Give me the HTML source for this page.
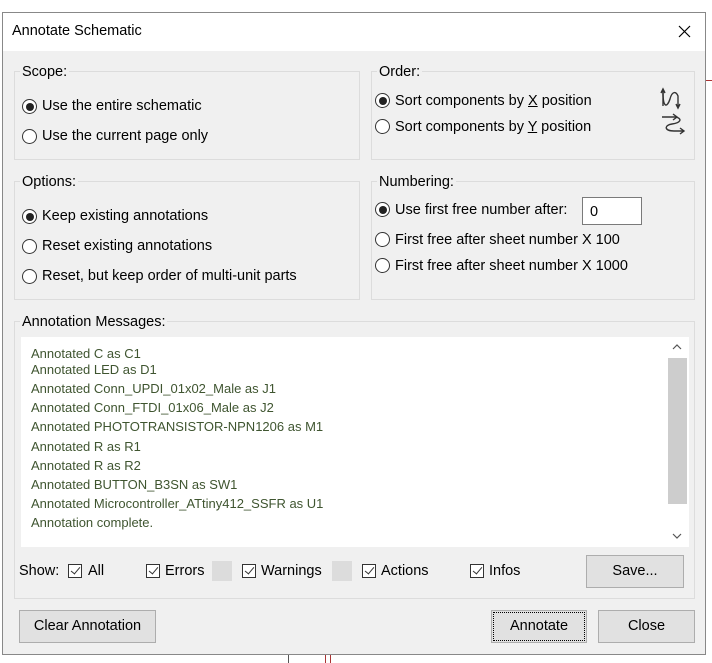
<!DOCTYPE html>
<html><head><style>
body{margin:0;width:712px;height:663px;background:#fff;position:relative;overflow:hidden;font-family:"Liberation Sans",sans-serif;font-size:14.5px;color:#000}
.a{position:absolute;white-space:nowrap}
.dlg{position:absolute;left:2px;top:12px;width:704px;height:643px;background:#f0f0f0;border:1px solid #888;box-sizing:border-box}
.tb{position:absolute;left:0;top:0;width:702px;height:38px;background:#fff}
.box{position:absolute;border:1px solid #dcdcdc;box-sizing:border-box}
.lbl{position:absolute;background:#f0f0f0;padding:0 2px;line-height:16px}
.r{position:absolute;width:15px;height:15px;border:1px solid #333;border-radius:50%;box-sizing:border-box;background:#fff}
.r.on::after{content:"";position:absolute;left:2.5px;top:2.5px;width:8px;height:8px;border-radius:50%;background:#222}
.cb{position:absolute;width:14px;height:14px;border:1px solid #333;box-sizing:border-box;background:#fff}
.cb::after{content:"";position:absolute;left:4px;top:0px;width:4px;height:8px;border:solid #333;border-width:0 1px 1px 0;transform:rotate(40deg)}
.btn{position:absolute;background:#e1e1e1;border:1px solid #adadad;box-sizing:border-box;text-align:center}
.m{position:absolute;left:31px;font-size:13px;color:#3f5530;white-space:nowrap}
u{text-decoration:underline}
</style></head><body>
<div class="a" style="left:288px;top:655px;width:1px;height:8px;background:#555"></div>
<div class="a" style="left:325px;top:655px;width:1px;height:8px;background:#a33"></div>
<div class="a" style="left:330px;top:655px;width:1px;height:8px;background:#a33"></div>
<div class="a" style="left:706px;top:80px;width:6px;height:1px;background:#a33"></div>
<div class="dlg">
<div class="tb"></div>
</div>
<div class="a" style="left:12px;top:23px;">Annotate Schematic</div>
<svg class="a" style="left:678px;top:25px" width="13" height="13"><path d="M1 1L12 12M12 1L1 12" stroke="#000" stroke-width="1.2"/></svg>

<div class="box" style="left:14px;top:71px;width:346px;height:89px"></div>
<div class="lbl" style="left:20px;top:64px">Scope:</div>
<div class="r on" style="left:22px;top:99px"></div><div class="a" style="left:42px;top:98px">Use the entire schematic</div>
<div class="r" style="left:22px;top:129px"></div><div class="a" style="left:42px;top:128px">Use the current page only</div>

<div class="box" style="left:371px;top:71px;width:324px;height:89px"></div>
<div class="lbl" style="left:377px;top:64px">Order:</div>
<div class="r on" style="left:375px;top:93px"></div><div class="a" style="left:395px;top:93px">Sort components by <u>X</u> position</div>
<div class="r" style="left:375px;top:119px"></div><div class="a" style="left:395px;top:119px">Sort components by <u>Y</u> position</div>
<svg class="a" style="left:658px;top:86px" width="30" height="52" fill="none" stroke="#333" stroke-width="1.4">
<path d="M5 20V4M3 7L5 3L7 7"/><path d="M5 6C5 22 9 22 12 13C14 5 18 5 20 10V21M18 18L20 22L22 18"/>
<path d="M4 31H18M15 28L19 31L15 34"/><path d="M18 31C25 33 22 37 14 38C6 39 6 45 16 45H25M22 42L26 45L22 48"/>
</svg>

<div class="box" style="left:14px;top:181px;width:346px;height:119px"></div>
<div class="lbl" style="left:20px;top:174px">Options:</div>
<div class="r on" style="left:22px;top:209px"></div><div class="a" style="left:42px;top:208px">Keep existing annotations</div>
<div class="r" style="left:22px;top:239px"></div><div class="a" style="left:42px;top:238px">Reset existing annotations</div>
<div class="r" style="left:22px;top:269px"></div><div class="a" style="left:42px;top:268px">Reset, but keep order of multi-unit parts</div>

<div class="box" style="left:371px;top:181px;width:324px;height:119px"></div>
<div class="lbl" style="left:377px;top:174px">Numbering:</div>
<div class="r on" style="left:375px;top:202px"></div><div class="a" style="left:395px;top:202px">Use first free number after:</div>
<div class="a" style="left:582px;top:197px;width:60px;height:28px;background:#fff;border:1px solid #7a7a7a;box-sizing:border-box;padding:6px 0 0 7px">0</div>
<div class="r" style="left:375px;top:232px"></div><div class="a" style="left:395px;top:232px">First free after sheet number X 100</div>
<div class="r" style="left:375px;top:258px"></div><div class="a" style="left:395px;top:258px">First free after sheet number X 1000</div>

<div class="box" style="left:14px;top:321px;width:681px;height:278px"></div>
<div class="lbl" style="left:20px;top:314px">Annotation Messages:</div>
<div class="a" style="left:21px;top:337px;width:668px;height:210px;background:#fff"></div>
<div class="a" style="left:668px;top:358px;width:19px;height:146px;background:#cdcdcd"></div>
<svg class="a" style="left:671px;top:342px" width="12" height="10"><path d="M2 7L6 3L10 7" stroke="#555" fill="none" stroke-width="1.2"/></svg>
<svg class="a" style="left:671px;top:531px" width="12" height="10"><path d="M2 3L6 7L10 3" stroke="#555" fill="none" stroke-width="1.2"/></svg>
<div class="m" style="top:346px">Annotated C as C1</div>
<div class="m" style="top:362px">Annotated LED as D1</div>
<div class="m" style="top:381px">Annotated Conn_UPDI_01x02_Male as J1</div>
<div class="m" style="top:400px">Annotated Conn_FTDI_01x06_Male as J2</div>
<div class="m" style="top:419px">Annotated PHOTOTRANSISTOR-NPN1206 as M1</div>
<div class="m" style="top:439px">Annotated R as R1</div>
<div class="m" style="top:458px">Annotated R as R2</div>
<div class="m" style="top:477px">Annotated BUTTON_B3SN as SW1</div>
<div class="m" style="top:496px">Annotated Microcontroller_ATtiny412_SSFR as U1</div>
<div class="m" style="top:515px">Annotation complete.</div>

<div class="a" style="left:19px;top:563px">Show:</div>
<div class="cb" style="left:68px;top:564px"></div><div class="a" style="left:88px;top:563px">All</div>
<div class="cb" style="left:146px;top:564px"></div><div class="a" style="left:165px;top:563px">Errors</div>
<div class="a" style="left:212px;top:561px;width:20px;height:20px;background:#dcdcdc"></div>
<div class="cb" style="left:242px;top:564px"></div><div class="a" style="left:261px;top:563px">Warnings</div>
<div class="a" style="left:332px;top:561px;width:20px;height:20px;background:#dcdcdc"></div>
<div class="cb" style="left:362px;top:564px"></div><div class="a" style="left:381px;top:563px">Actions</div>
<div class="cb" style="left:470px;top:564px"></div><div class="a" style="left:489px;top:563px">Infos</div>
<div class="btn" style="left:586px;top:555px;width:98px;height:33px;line-height:31px">Save...</div>

<div class="btn" style="left:19px;top:610px;width:137px;height:33px;line-height:31px">Clear Annotation</div>
<div class="btn" style="left:491px;top:610px;width:96px;height:33px;line-height:31px;outline:1px dotted #000;outline-offset:-3px">Annotate</div>
<div class="btn" style="left:598px;top:610px;width:97px;height:33px;line-height:31px">Close</div>
</body></html>
